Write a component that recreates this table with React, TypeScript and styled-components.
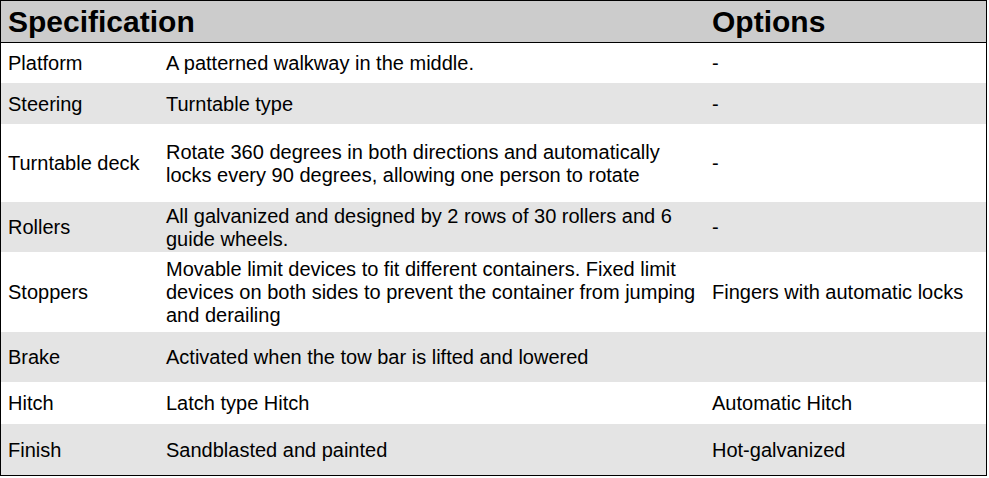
import React from 'react';
import styled, { createGlobalStyle } from 'styled-components';

type Spec = {
  name: string;
  detail: string;
  option: string;
  height: number;
};

const specs: Spec[] = [
  { name: 'Platform', detail: 'A patterned walkway in the middle.', option: '-', height: 40 },
  { name: 'Steering', detail: 'Turntable type', option: '-', height: 41 },
  {
    name: 'Turntable deck',
    detail:
      'Rotate 360 degrees in both directions and automatically locks every 90 degrees, allowing one person to rotate',
    option: '-',
    height: 78,
  },
  {
    name: 'Rollers',
    detail: 'All galvanized and designed by 2 rows of 30 rollers and 6 guide wheels.',
    option: '-',
    height: 50,
  },
  {
    name: 'Stoppers',
    detail:
      'Movable limit devices to fit different containers. Fixed limit devices on both sides to prevent the container from jumping and derailing',
    option: 'Fingers with automatic locks',
    height: 80,
  },
  { name: 'Brake', detail: 'Activated when the tow bar is lifted and lowered', option: '', height: 50 },
  { name: 'Hitch', detail: 'Latch type Hitch', option: 'Automatic Hitch', height: 42 },
  { name: 'Finish', detail: 'Sandblasted and painted', option: 'Hot-galvanized', height: 51 },
];

const App = () => {
  return (
    <>
      <GlobalStyle />
      <Table>
        <HeaderRow>
          <HeadCell>Specification</HeadCell>
          <HeadCell />
          <HeadCell>Options</HeadCell>
        </HeaderRow>
        {specs.map((spec, i) => (
          <Row key={spec.name} $height={spec.height} $shaded={i % 2 === 1}>
            <Cell>{spec.name}</Cell>
            <Cell>{spec.detail}</Cell>
            <Cell>{spec.option}</Cell>
          </Row>
        ))}
      </Table>
    </>
  );
};

const GlobalStyle = createGlobalStyle`
  body {
    margin: 0;
    background: #fff;
    font-family: "Liberation Sans", Arial, sans-serif;
    color: #000;
  }
`;

const Table = styled.div`
  width: 987px;
  box-sizing: border-box;
  border: 1px solid #000;
  display: flex;
  flex-direction: column;
`;

const columns = 'grid-template-columns: 158px 546px 1fr;';

const HeaderRow = styled.div`
  display: grid;
  ${columns}
  height: 41px;
  background: #cccccc;
  border-bottom: 1px solid #000;
`;

const HeadCell = styled.div`
  display: flex;
  align-items: center;
  padding: 0 7px;
  font-size: 30px;
  font-weight: bold;
  white-space: nowrap;
`;

const Row = styled.div<{ $height: number; $shaded: boolean }>`
  display: grid;
  ${columns}
  height: ${(p) => p.$height}px;
  background: ${(p) => (p.$shaded ? '#e4e4e4' : '#fff')};
`;

const Cell = styled.div`
  display: flex;
  align-items: center;
  padding: 1px 3px 0 7px;
  font-size: 20px;
  line-height: 23px;
`;

export default App;
